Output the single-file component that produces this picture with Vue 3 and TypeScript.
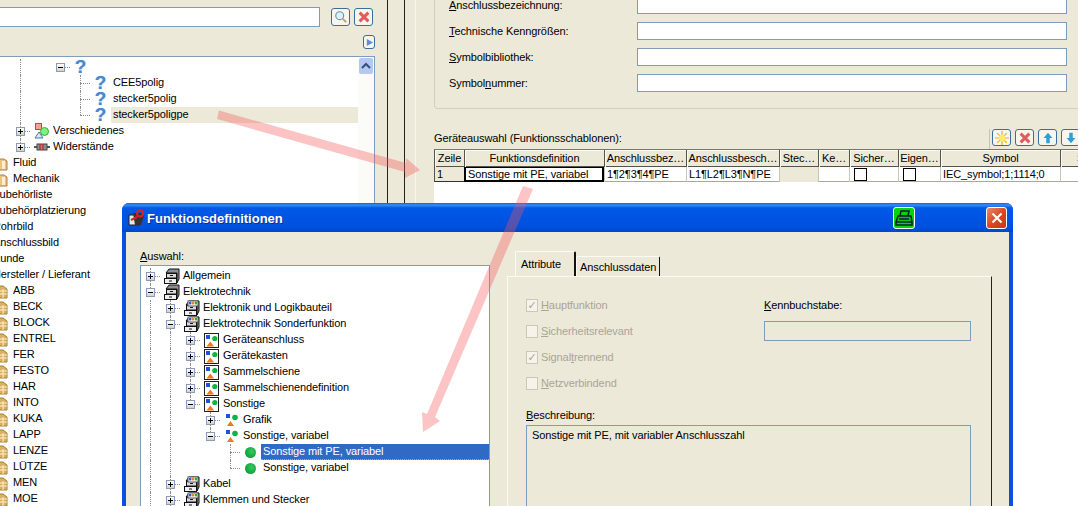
<script setup lang="ts">
interface Row {
  g: string
  exp?: '+' | '-' | ''
  icon?: string
  text?: string
  cls?: string
  end?: string
}

const outerRows: Row[] = [
  { g: '00010', exp: '-', icon: 'q' },
  { g: '000100', exp: '', icon: 'q', text: 'CEE5polig', end: 'mid' },
  { g: '000100', exp: '', icon: 'q', text: 'stecker5polig', end: 'mid' },
  { g: '000100', exp: '', icon: 'q', text: 'stecker5poligpe', end: 'last', cls: 'grey' },
  { g: '000', exp: '+', icon: 'misc', text: 'Verschiedenes', end: 'mid' },
  { g: '000', exp: '+', icon: 'res', text: 'Widerstände', end: 'last' },
  { g: '0', exp: '+', icon: 'fold', text: 'Fluid' },
  { g: '0', exp: '+', icon: 'fold', text: 'Mechanik' },
  { g: '', exp: '+', text: 'Zubehörliste' },
  { g: '', exp: '+', text: 'Zubehörplatzierung' },
  { g: '', exp: '+', text: 'Rohrbild' },
  { g: '', exp: '+', text: 'Anschlussbild' },
  { g: '', exp: '+', text: 'Kunde' },
  { g: '', exp: '-', text: 'Hersteller / Lieferant' },
  ...['ABB', 'BECK', 'BLOCK', 'ENTREL', 'FER', 'FESTO', 'HAR', 'INTO', 'KUKA', 'LAPP', 'LENZE', 'LÜTZE', 'MEN', 'MOE'].map(
    (text): Row => ({ g: '0', exp: '+', icon: 'lock', text })
  ),
]

const dialogRows: Row[] = [
  { g: '', exp: '+', icon: 'cab', text: 'Allgemein', end: 'mid' },
  { g: '', exp: '-', icon: 'cab', text: 'Elektrotechnik', end: 'last' },
  { g: '1', exp: '+', icon: 'cab2', text: 'Elektronik und Logikbauteil', end: 'mid' },
  { g: '1', exp: '-', icon: 'cab2', text: 'Elektrotechnik Sonderfunktion', end: 'mid' },
  { g: '11', exp: '+', icon: 'sym', text: 'Geräteanschluss', end: 'mid' },
  { g: '11', exp: '+', icon: 'sym', text: 'Gerätekasten', end: 'mid' },
  { g: '11', exp: '+', icon: 'sym', text: 'Sammelschiene', end: 'mid' },
  { g: '11', exp: '+', icon: 'sym', text: 'Sammelschienendefinition', end: 'mid' },
  { g: '11', exp: '-', icon: 'sym', text: 'Sonstige', end: 'last' },
  { g: '110', exp: '+', icon: 'sym0', text: 'Grafik', end: 'mid' },
  { g: '110', exp: '-', icon: 'sym0', text: 'Sonstige, variabel', end: 'last' },
  { g: '1100', exp: '', icon: 'dot', text: 'Sonstige mit PE, variabel', end: 'mid', cls: 'sel' },
  { g: '1100', exp: '', icon: 'dot', text: 'Sonstige, variabel', end: 'last' },
  { g: '1', exp: '+', icon: 'cab2', text: 'Kabel', end: 'mid' },
  { g: '1', exp: '+', icon: 'cab2', text: 'Klemmen und Stecker', end: 'mid' },
]

const cols = [
  'Zeile', 'Funktionsdefinition', 'Anschlussbez…', 'Anschlussbesch…', 'Stec…', 'Ke…', 'Sicher…', 'Eigen…', 'Symbol', 'S',
]
const guides = (r: Row) => r.g.split('').map((c) => c === '1')
</script>

<template>
  <div class="screen">
    <!-- left pane of the main window -->
    <section class="outer-left">
      <div class="search">
        <div class="search-input"></div>
        <button class="tb">
          <svg viewBox="0 0 16 16"><circle cx="6.5" cy="6.5" r="4.5" fill="#dff0fa" stroke="#6b8fb0" stroke-width="1.3" /><path d="M10 10l4 4" stroke="#b09868" stroke-width="2" /></svg>
        </button>
        <button class="tb">
          <svg viewBox="0 0 16 16"><path d="M3 3l10 10M13 3L3 13" stroke="#e25a5a" stroke-width="3.4" /></svg>
        </button>
      </div>
      <div class="mini-row">
        <button class="tb mini">
          <svg viewBox="0 0 10 10"><path d="M2 1l7 4-7 4z" fill="#5c8fd8" /></svg>
        </button>
      </div>
      <div class="tree-wrap">
        <div class="tree outer-tree">
          <div v-for="(r, i) in outerRows" :key="i" class="row">
            <span v-for="(on, j) in guides(r)" :key="j" class="cell" :class="{ on }"></span>
            <span class="cell conn" :class="r.end">
              <span v-if="r.exp" class="exp"><i></i><i v-if="r.exp === '+'" class="v"></i></span>
            </span>
            <span class="ico">
              <span v-if="r.icon === 'q'" class="q">?</span>
              <svg v-else-if="r.icon === 'misc'" viewBox="0 0 16 16" width="16" height="16"><rect x="1.5" y="0.5" width="6" height="6" fill="#f4a0a0" stroke="#d04040" /><circle cx="10.5" cy="8.5" r="4" fill="#80f080" stroke="#30b030" /><path d="M1 15l4-6 4 6z" fill="#d8e8f8" stroke="#5070b0" /></svg>
              <svg v-else-if="r.icon === 'res'" viewBox="0 0 16 16" width="16" height="16"><path d="M0 8h16" stroke="#555" stroke-width="2" /><rect x="3" y="5" width="10" height="6" fill="#909090" stroke="#444" /><path d="M6 5v6M9 5v6" stroke="#c03030" stroke-width="1.4" /></svg>
              <svg v-else-if="r.icon === 'fold'" class="shift" viewBox="0 0 16 16" width="16" height="16"><path d="M2 4h10l3 2v9H2z" fill="#efc37a" stroke="#b08040" /><path d="M10 6h3v8h-3z" fill="#fff0d0" /></svg>
              <svg v-else-if="r.icon === 'lock'" class="shift" viewBox="0 0 16 16" width="16" height="16"><path d="M2 6l4-3h5l4 3v9H2z" fill="#d8b060" stroke="#a88030" /><path d="M8 8h7M8 11h7M11 6v9" stroke="#fff0c8" /></svg>
            </span>
            <span v-if="r.text" class="lbl" :class="r.cls">{{ r.text }}</span>
          </div>
        </div>
        <div class="scroll">
          <div class="scroll-btn">
            <svg viewBox="0 0 14 16" width="14" height="16"><path d="M3 10l4-4 4 4" fill="none" stroke="#36507a" stroke-width="2" /></svg>
          </div>
        </div>
      </div>
    </section>

    <div class="splitter"></div>

    <!-- right pane of the main window -->
    <section class="outer-right">
      <div class="group">
        <div class="field"><label><u>A</u>nschlussbezeichnung:</label><div class="input"></div></div>
        <div class="field"><label><u>T</u>echnische Kenngrößen:</label><div class="input"></div></div>
        <div class="field"><label><u>S</u>ymbolbibliothek:</label><div class="input"></div></div>
        <div class="field"><label>Symbol<u>n</u>ummer:</label><div class="input"></div></div>
      </div>
      <div class="table-head">
        <span>Geräteauswahl (Funktionsschablonen):</span>
        <div class="tools">
          <button class="tb t2">
            <svg viewBox="0 0 16 16"><g stroke="#f0b020" stroke-width="1.4"><path d="M8 0v16M0 8h16M2.5 2.5l11 11M13.5 2.5l-11 11" /></g><circle cx="8" cy="8" r="3.6" fill="#ffe878" /></svg>
          </button>
          <button class="tb t2">
            <svg viewBox="0 0 16 16"><path d="M3 3l10 10M13 3L3 13" stroke="#e25a5a" stroke-width="3.4" /></svg>
          </button>
          <button class="tb t2">
            <svg viewBox="0 0 16 16"><path d="M8 2l5 6h-3v6H6V8H3z" fill="#2f9fd8" /></svg>
          </button>
          <button class="tb t2">
            <svg viewBox="0 0 16 16"><path d="M8 14l5-6h-3V2H6v6H3z" fill="#2f9fd8" /></svg>
          </button>
        </div>
      </div>
      <div class="grid">
        <div class="gr ghead">
          <div v-for="c in cols" :key="c" class="gh">{{ c }}</div>
        </div>
        <div class="gr gbody">
          <div class="gc zeile">1</div>
          <div class="gc focus">Sonstige mit PE, variabel</div>
          <div class="gc">1¶2¶3¶4¶PE</div>
          <div class="gc">L1¶L2¶L3¶N¶PE</div>
          <div class="gc off"></div>
          <div class="gc"></div>
          <div class="gc"><span class="cb"></span></div>
          <div class="gc"><span class="cb"></span></div>
          <div class="gc">IEC_symbol;1;1114;0</div>
          <div class="gc"></div>
        </div>
      </div>
    </section>

    <!-- floating dialog -->
    <div class="dialog">
      <header class="title">
        <svg class="t-ico" viewBox="0 0 18 18" width="18" height="18">
          <path d="M1 6h11v10H1z" fill="#e8e8e8" stroke="#222" />
          <path d="M5 4l8 0 3 3-3 9H7z" fill="#333" />
          <circle cx="12" cy="4.5" r="3" fill="none" stroke="#e02020" stroke-width="2" />
          <path d="M3 11l6-3" stroke="#e02020" stroke-width="2" />
        </svg>
        <span class="t-text">Funktionsdefinitionen</span>
        <button class="green">
          <svg viewBox="0 0 18 18" width="18" height="18" fill="none" stroke="#023" stroke-width="1.5">
            <path d="M6 2h8l-1 5H5z" />
            <path d="M3 7h13l1 6H1z" fill="#10c010" />
            <path d="M1 13v3h16v-3" />
            <path d="M4 10h10" />
          </svg>
        </button>
        <button class="close">
          <svg viewBox="0 0 12 12" width="12" height="12"><path d="M1.5 1.5l9 9M10.5 1.5l-9 9" stroke="#fff" stroke-width="2.2" /></svg>
        </button>
      </header>
      <div class="d-body">
        <div class="d-left">
          <label><u>A</u>uswahl:</label>
          <div class="tree d-tree">
            <div v-for="(r, i) in dialogRows" :key="i" class="row">
              <span v-for="(on, j) in guides(r)" :key="j" class="cell" :class="{ on }"></span>
              <span class="cell conn" :class="r.end">
                <span v-if="r.exp" class="exp"><i></i><i v-if="r.exp === '+'" class="v"></i></span>
              </span>
              <span class="ico">
                <svg v-if="r.icon === 'cab' || r.icon === 'cab2'" viewBox="0 0 17 16" width="17" height="16">
                  <path d="M6 1h10v10l-2 4V5H3z" fill="#8f8f8f" stroke="#111" />
                  <rect x="3.5" y="5.5" width="10" height="4.5" fill="#dcdcdc" stroke="#111" />
                  <rect x="1.5" y="10.5" width="12" height="5" fill="#efefef" stroke="#111" />
                  <path d="M7 7.5h3M6 13h3" stroke="#111" />
                  <template v-if="r.icon === 'cab2'">
                    <rect x="5" y="1" width="10" height="5" fill="#fff" stroke="#555" />
                    <rect x="6" y="2" width="2.4" height="2.4" fill="#2060e0" />
                    <rect x="9" y="2" width="2.4" height="2.4" fill="#f08030" />
                    <rect x="12" y="2" width="2" height="2.4" fill="#20b040" />
                  </template>
                </svg>
                <span v-else-if="r.icon === 'sym'" class="frame">
                  <svg viewBox="0 0 13 13" width="13" height="13"><rect x="1" y="1" width="4" height="4" fill="#2050e0" /><circle cx="9.8" cy="4.5" r="2.6" fill="#10b048" /><path d="M1.5 12.5l3.8-5 3.8 5z" fill="#f07820" /></svg>
                </span>
                <svg v-else-if="r.icon === 'sym0'" viewBox="0 0 14 14" width="14" height="14"><rect x="1" y="1" width="4" height="4" fill="#2050e0" /><circle cx="10" cy="4.5" r="2.8" fill="#10b048" /><path d="M2 13l3.5-5 3.5 5z" fill="#f07820" /></svg>
                <span v-else-if="r.icon === 'dot'" class="ball"></span>
              </span>
              <span class="lbl" :class="r.cls">{{ r.text }}</span>
            </div>
          </div>
        </div>
        <div class="d-right">
          <div class="tabs">
            <div class="tab on">Attribute</div>
            <div class="tab">Anschlussdaten</div>
          </div>
          <div class="pane">
            <div class="attr">
              <div class="checks">
                <div class="chk"><span class="dcb">✓</span><span><u>H</u>auptfunktion</span></div>
                <div class="chk"><span class="dcb"></span><span><u>S</u>icherheitsrelevant</span></div>
                <div class="chk"><span class="dcb">✓</span><span>Signal<u>t</u>rennend</span></div>
                <div class="chk"><span class="dcb"></span><span><u>N</u>etzverbindend</span></div>
              </div>
              <div class="kenn">
                <label><u>K</u>ennbuchstabe:</label>
                <div class="kenn-input"></div>
              </div>
            </div>
            <label class="b-label"><u>B</u>eschreibung:</label>
            <div class="desc">Sonstige mit PE, mit variabler Anschlusszahl</div>
          </div>
        </div>
      </div>
    </div>

    <!-- red annotation arrows over everything -->
    <svg class="arrows" viewBox="0 0 1078 506" width="1078" height="506">
      <g fill="#f55555" opacity="0.35">
        <path d="M219 110.5L406 163l0-5 14 12-15 8 0-6-188-53z" />
        <path d="M523 186l10 3-98 228 5 4-17 11-1-20 5 2z" />
      </g>
    </svg>
  </div>
</template>

<style>
html,
body {
  margin: 0;
  background: #ece9d8;
}
</style>

<style scoped>
.screen {
  position: relative;
  display: flex;
  width: 1078px;
  height: 506px;
  overflow: hidden;
  background: #ece9d8;
  font: 11px "Liberation Sans", Arial, sans-serif;
  letter-spacing: -0.1px;
  color: #000;
}
button {
  padding: 0;
  font: inherit;
}
label {
  display: block;
}
u {
  text-decoration: underline;
}

/* left */
.outer-left {
  display: flex;
  flex-direction: column;
  flex: 0 0 387px;
  width: 387px;
  box-sizing: border-box;
  padding-right: 12px;
  overflow: hidden;
}
.search {
  display: flex;
  align-items: center;
  height: 20px;
  margin-top: 7px;
}
.search-input {
  width: 320px;
  height: 20px;
  box-sizing: border-box;
  background: #fff;
  border: 1px solid #7f9db9;
  border-left: 0;
}
.tb {
  display: flex;
  align-items: center;
  justify-content: center;
  width: 19px;
  height: 18px;
  margin-left: 11px;
  box-sizing: border-box;
  background: #f6f5ee;
  border: 1px solid #3c6d9e;
  border-radius: 3px;
}
.tb + .tb {
  margin-left: 4px;
}
.tb svg {
  width: 14px;
  height: 14px;
}
.mini-row {
  display: flex;
  justify-content: flex-end;
  height: 29px;
  align-items: flex-end;
}
.tb.mini {
  width: 12px;
  height: 14px;
  margin-bottom: 7px;
}
.tb.mini svg {
  width: 9px;
  height: 9px;
}
.tree-wrap {
  flex: 1;
  display: flex;
  background: #fff;
  border: 1px solid #7f9db9;
  border-left: 0;
  border-bottom: 0;
  overflow: hidden;
}
.tree {
  flex: 1;
  min-width: 0;
  background: #fff;
  overflow: hidden;
}
.outer-tree {
  padding-top: 2px;
  margin-left: -50px;
}
.scroll {
  flex: 0 0 16px;
  background: #fbfbf8;
}
.scroll-btn {
  height: 16px;
  width: 14px;
  margin: 1px 1px 0;
  background: #b4c8f2;
  border-radius: 2px;
}
.row {
  display: flex;
  align-items: center;
  height: 16px;
  white-space: nowrap;
}
.cell {
  flex: 0 0 20px;
  width: 20px;
  height: 16px;
  position: relative;
}
.cell.on::before {
  content: "";
  position: absolute;
  left: 10px;
  top: 0;
  bottom: 0;
  border-left: 1px dotted #8c8c8c;
}
.conn::after {
  content: "";
  position: absolute;
  left: 10px;
  right: 0;
  top: 8px;
  border-top: 1px dotted #8c8c8c;
}
.conn.mid::before,
.conn.last::before {
  content: "";
  position: absolute;
  left: 10px;
  top: 0;
  height: 8px;
  border-left: 1px dotted #8c8c8c;
}
.conn.mid::before {
  height: 16px;
}
.exp {
  position: absolute;
  z-index: 1;
  left: 6px;
  top: 4px;
  width: 9px;
  height: 9px;
  box-sizing: border-box;
  border: 1px solid #8a9cb4;
  background: linear-gradient(#fff, #d6d2c4);
}
.exp i {
  position: absolute;
  left: 1px;
  top: 3px;
  width: 5px;
  height: 1px;
  background: #000;
}
.exp i.v {
  left: 3px;
  top: 1px;
  width: 1px;
  height: 5px;
}
.ico {
  flex: 0 0 23px;
  width: 23px;
  height: 16px;
  display: flex;
  align-items: center;
  justify-content: center;
  position: relative;
}
.ico svg {
  display: block;
  flex: none;
}
.ico .shift {
  position: relative;
  left: -2px;
}
.q {
  margin-right: 2px;
  font: bold 19px/16px "Liberation Sans", sans-serif;
  letter-spacing: 0;
  color: #4a86d4;
  text-shadow: 0 0 1px #9fc2ee;
}
.lbl {
  padding: 0 1px 1px 0;
  line-height: 15px;
}
.lbl.grey {
  flex: 1;
  margin-left: -2px;
  padding-left: 2px;
  background: #ece9d8;
}
.lbl.sel {
  flex: 1;
  margin-left: -2px;
  padding-left: 2px;
  background: #316ac5;
  color: #fff;
  border-bottom: 1px dotted #e8a040;
  line-height: 14px;
}

/* splitter */
.splitter {
  flex: 0 0 18px;
  box-sizing: border-box;
  border-left: 1px solid #222;
  border-right: 1px solid #222;
}

/* right */
.outer-right {
  flex: 1;
  min-width: 0;
  display: flex;
  flex-direction: column;
  padding-left: 29px;
  background: linear-gradient(90deg, transparent 10px, #f7f6ee 10px, #f7f6ee 11px, transparent 11px);
}
.group {
  display: flex;
  flex-direction: column;
  gap: 8px;
  margin-top: -22px;
  padding: 18px 11px 16px 14px;
  border-left: 1px solid #d0d0bf;
  border-bottom: 1px solid #d0d0bf;
  border-radius: 0 0 0 4px;
}
.field {
  display: flex;
  align-items: center;
  height: 18px;
}
.field label {
  width: 188px;
}
.input {
  flex: 1;
  height: 18px;
  box-sizing: border-box;
  background: #fff;
  border: 1px solid #7f9db9;
}
.table-head {
  display: flex;
  align-items: flex-end;
  justify-content: space-between;
  height: 40px;
  line-height: 14px;
}
.table-head span {
  padding-bottom: 4px;
}
.tools {
  display: flex;
  gap: 4px;
  flex: none;
  margin-right: -2px;
  padding: 0 0 3px 2px;
  border-left: 1px solid #c8c4b0;
}
.tb.t2,
.tb.t2 + .tb {
  margin: 0;
  height: 17px;
}
.grid {
  flex: 1;
  background: #fff;
  overflow: hidden;
}
.gr {
  display: grid;
  grid-template-columns: 30px 140px 82px 93px 39px 31px 49px 42px 120px 40px;
}
.ghead {
  height: 18px;
  background: #ece9d8;
  border-top: 1px solid #77766b;
  box-sizing: border-box;
}
.gh {
  box-sizing: border-box;
  border-left: 1px solid #55544c;
  text-align: center;
  line-height: 16px;
  overflow: hidden;
  white-space: nowrap;
  box-shadow: inset 1px 1px 0 #fbfaf4, inset 0 -1px 0 #55544c;
}
.gbody {
  height: 15px;
  box-shadow: inset 0 -1px 0 #aaa99c;
}
.gc {
  box-sizing: border-box;
  padding-left: 2px;
  line-height: 14px;
  border-left: 1px solid #c8c6b8;
  overflow: hidden;
  white-space: nowrap;
  position: relative;
}
.zeile {
  background: #ece9d8;
  border-left: 1px solid #55544c;
  border-bottom: 1px solid #333;
}
.focus {
  border: 2px solid #000;
  border-top-width: 1px;
  line-height: 12px;
}
.off {
  background: #ece9d8;
}
.cb {
  display: block;
  width: 13px;
  height: 13px;
  box-sizing: border-box;
  margin: 1px 0 0 2px;
  border: 1px solid #000;
  background: #fff;
}

/* dialog */
.dialog {
  position: absolute;
  left: 122px;
  top: 203px;
  width: 891px;
  height: 330px;
  box-sizing: border-box;
  border: solid #0a50dc;
  border-width: 0 4px;
  border-radius: 7px 7px 0 0;
  background: #ece9d8;
}
.title {
  display: flex;
  align-items: center;
  height: 29px;
  margin: 0 -4px 1px;
  padding: 1px 6px 0;
  box-sizing: border-box;
  border-radius: 7px 7px 0 0;
  background: linear-gradient(#0a5fe8 0, #3a8cf8 2px, #0058e6 5px, #0054e3 50%, #0050dc 85%, #0046c8 100%);
}
.t-ico {
  flex: none;
}
.t-text {
  flex: 1;
  margin-left: 1px;
  color: #fff;
  font: bold 13px "Liberation Sans", sans-serif;
  letter-spacing: 0;
  text-shadow: 1px 1px 0 #0a2e96;
}
.green {
  flex: none;
  width: 22px;
  height: 22px;
  margin-right: 71px;
  display: flex;
  align-items: center;
  justify-content: center;
  background: #04d604;
  border: 1px solid #fff;
  border-radius: 3px;
}
.close {
  flex: none;
  width: 21px;
  height: 22px;
  display: flex;
  align-items: center;
  justify-content: center;
  background: linear-gradient(135deg, #e68a6c, #d8461e 55%, #c33a14);
  border: 1px solid #fff;
  border-radius: 3px;
}
.d-body {
  display: flex;
}
.d-left {
  flex: 0 0 350px;
  margin-left: 14px;
  padding-top: 16px;
}
.d-left label {
  height: 16px;
  line-height: 14px;
}
.d-tree {
  height: 300px;
  box-sizing: border-box;
  border: 1px solid #7f9db9;
  padding-top: 2px;
}
.d-tree .row {
  margin-left: -1px;
}
.frame {
  display: block;
  width: 15px;
  height: 15px;
  box-sizing: border-box;
  border: 1px solid #222;
  background: #fff;
}
.frame svg {
  display: block;
}
.ball {
  display: block;
  width: 11px;
  height: 11px;
  margin-right: 2px;
  border-radius: 50%;
  background: radial-gradient(circle at 60% 40%, #35c860, #0ea23c 70%, #0b8a30);
}
.d-right {
  flex: 1;
  margin-left: 17px;
  margin-right: 17px;
  padding-top: 18px;
  min-width: 0;
}
.tabs {
  display: flex;
  align-items: flex-end;
  height: 25px;
  padding-left: 8px;
}
.tab {
  height: 20px;
  box-sizing: border-box;
  padding: 0 5px 0 3px;
  line-height: 20px;
  border: solid #fbfaf4;
  border-width: 1px 0 0 1px;
  border-right: 1px solid #111;
  border-radius: 2px 2px 0 0;
  width: 84px;
  text-align: left;
}
.tab.on {
  height: 25px;
  width: 61px;
  line-height: 25px;
  padding-left: 5px;
  border-right-width: 2px;
}
.pane {
  height: 240px;
  box-sizing: border-box;
  border: solid #fbfaf4;
  border-width: 1px 0 0 1px;
  border-right: 1px solid #222;
  padding: 20px 19px 0 18px;
}
.attr {
  display: flex;
  height: 114px;
}
.checks {
  flex: 0 0 238px;
  display: flex;
  flex-direction: column;
  gap: 10px;
}
.chk {
  display: flex;
  align-items: center;
  gap: 3px;
  height: 16px;
  color: #a8a59a;
}
.dcb {
  flex: none;
  width: 12px;
  height: 13px;
  box-sizing: border-box;
  border: 1px solid #cbc8ba;
  background: #f6f4ea;
  color: #a8a59a;
  font: bold 11px/11px "DejaVu Sans", sans-serif;
  text-align: center;
}
.kenn label {
  line-height: 16px;
  height: 24px;
}
.kenn-input {
  width: 207px;
  height: 20px;
  box-sizing: border-box;
  border: 1px solid #7f9db9;
}
.b-label {
  height: 11px;
  line-height: 9px;
  margin-bottom: 3px;
}
.desc {
  width: 445px;
  height: 90px;
  box-sizing: border-box;
  border: 1px solid #7f9db9;
  padding: 2px 5px;
  line-height: 14px;
}

.arrows {
  position: absolute;
  left: 0;
  top: 0;
  pointer-events: none;
}
</style>
